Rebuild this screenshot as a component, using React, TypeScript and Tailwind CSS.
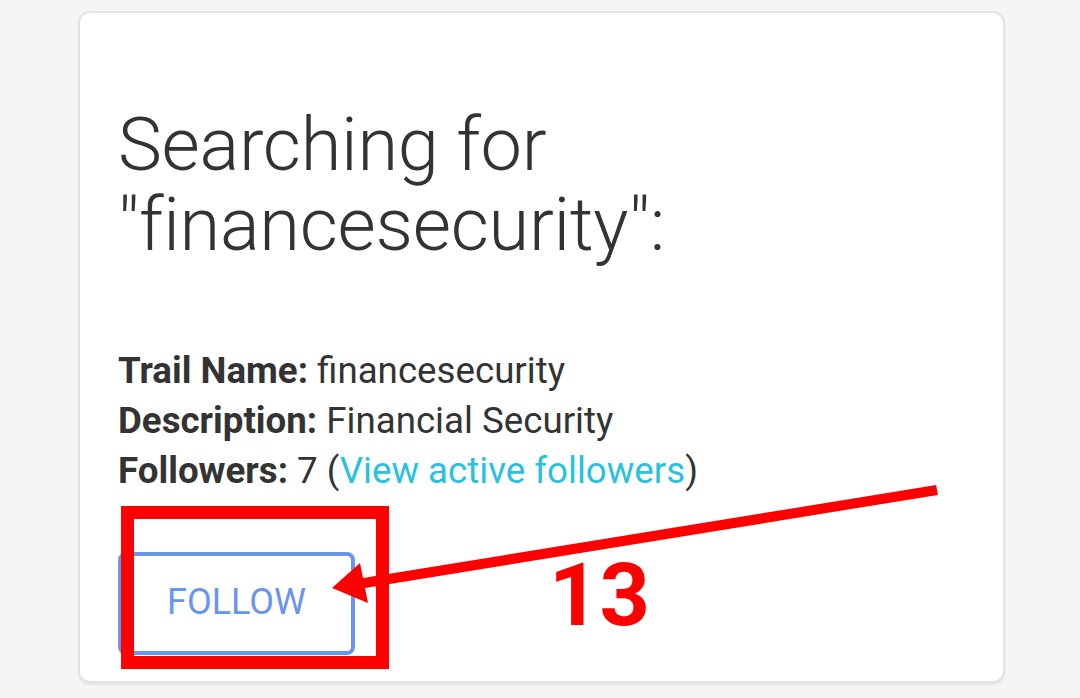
import React from "react";

export default function App() {
  return (
    <div
      className="relative w-[1080px] h-[698px] overflow-hidden bg-[#f5f5f5] pt-[11px] pl-[78px]"
      style={{ fontFamily: "Roboto, 'Liberation Sans', sans-serif" }}
    >
      <div className="w-[927px] h-[672px] rounded-[12px] border-2 border-[#e3e3e3] bg-white shadow-[0_2px_2px_rgba(0,0,0,0.06)] pl-[38px] pt-[92px] text-[#333333]">
        <h1 className="text-[74px] leading-[80px] font-light tracking-[-0.3px]">
          Searching for
          <br />
          "financesecurity":
        </h1>
        <div className="mt-[81px] text-[36.7px] leading-[50px]">
          <div>
            <span className="font-bold">Trail Name:</span> financesecurity
          </div>
          <div>
            <span className="font-bold">Description:</span> Financial Security
          </div>
          <div>
            <span className="font-bold">Followers:</span> 7 (
            <span className="text-[#28c1df]">View active followers</span>)
          </div>
        </div>
        <button className="mt-[56px] w-[237px] h-[103px] rounded-[8px] border-4 border-[#6a95ec] text-[#6a95ec] text-[36px] font-normal flex items-center justify-center pb-[3px]">
          FOLLOW
        </button>
      </div>

      <svg
        className="absolute left-0 top-0 pointer-events-none"
        width="1080"
        height="698"
        viewBox="0 0 1080 698"
      >
        <rect
          x="127.5"
          y="512.5"
          width="255"
          height="150"
          fill="none"
          stroke="#ff0000"
          strokeWidth="13"
        />
        <line
          x1="937"
          y1="490"
          x2="358"
          y2="584"
          stroke="#ff0000"
          strokeWidth="10"
        />
        <polygon points="332,588 360,563 368,603" fill="#ff0000" />
      </svg>
      <div className="absolute left-[549px] top-[545px] text-[88px] leading-[100px] font-bold text-[#ff0000]">
        13
      </div>
    </div>
  );
}
